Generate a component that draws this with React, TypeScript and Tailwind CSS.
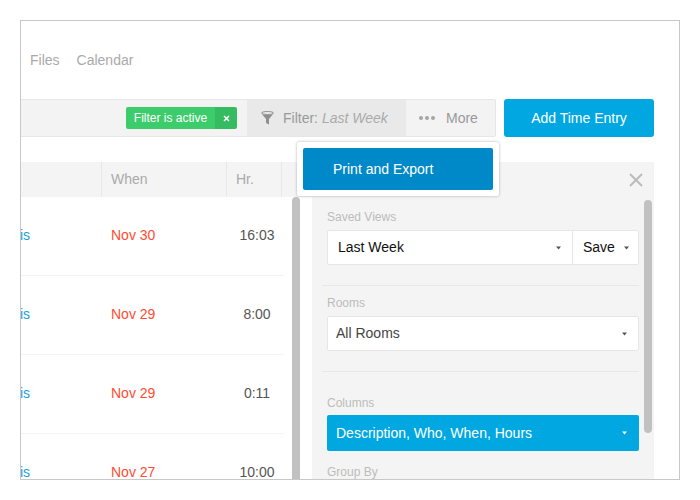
import { Fragment } from "react";

const rows = [
  { when: "Nov 30", hours: "16:03" },
  { when: "Nov 29", hours: "8:00" },
  { when: "Nov 29", hours: "0:11" },
  { when: "Nov 27", hours: "10:00" },
];

function Caret({ className }: { className: string }) {
  return (
    <svg width="7" height="4" viewBox="0 0 7 4" className={className}>
      <path d="M1 0.5h5L3.5 3.5z" fill="currentColor" />
    </svg>
  );
}

function FieldLabel({ children }: { children: string }) {
  return <div className="text-[12px] leading-[14px] text-[#bcbcbc]">{children}</div>;
}

export default function App() {
  return (
    <div className="h-[500px] w-[700px] bg-white p-[20px] font-['Liberation_Sans',Arial,sans-serif]">
      <div className="relative flex h-[460px] w-[660px] flex-col overflow-hidden border border-[#c8c8c8]">
        <nav className="flex h-[78px] shrink-0 items-center gap-[17px] pl-[9px] text-[14px] text-[#aaaaaa]">
          <span>Files</span>
          <span>Calendar</span>
        </nav>

        <div className="flex h-[38px] shrink-0 gap-[8px] pr-[25px]">
          <div className="flex flex-1 rounded-r-[2px] border-y border-r border-[#e6e6e6] bg-[#f3f3f3] text-[14px] text-[#999999]">
            <div className="flex flex-1 items-center justify-end pr-[10px]">
              <div className="flex h-[22px] overflow-hidden rounded-[2px] text-[12px] text-white">
                <span className="flex w-[89px] items-center justify-center bg-[#3dcc6c]">Filter is active</span>
                <span className="flex w-[22px] items-center justify-center bg-[#35bb61]">
                  <svg width="7" height="7" viewBox="0 0 7 7">
                    <path d="M1 1l5 5M6 1L1 6" stroke="white" strokeWidth="1.5" />
                  </svg>
                </span>
              </div>
            </div>
            <div className="flex w-[159px] items-center bg-[#e9e9e9] pl-[14px]">
              <svg width="13" height="14" viewBox="0 0 13 14" className="text-[#8f8f8f]">
                <ellipse cx="6.5" cy="2" rx="6" ry="1.5" fill="none" stroke="currentColor" strokeWidth="1" />
                <path d="M1 3.2C3 4.2 10 4.2 12 3.2L8 8V13.5L5 12V8Z" fill="currentColor" />
              </svg>
              <span className="ml-[9px]">
                Filter: <em className="text-[#aaaaaa]">Last Week</em>
              </span>
            </div>
            <div className="flex w-[89px] items-center pl-[13px]">
              <span className="flex gap-[2px]">
                <i className="h-[4px] w-[4px] rounded-full bg-[#a5a5a5]" />
                <i className="h-[4px] w-[4px] rounded-full bg-[#a5a5a5]" />
                <i className="h-[4px] w-[4px] rounded-full bg-[#a5a5a5]" />
              </span>
              <span className="ml-[11px]">More</span>
            </div>
          </div>
          <button className="w-[150px] rounded-[3px] bg-[#00a7e1] text-[14px] text-white">Add Time Entry</button>
        </div>

        <div className="mt-[25px] flex min-h-0 flex-1 pr-[25px]">
          <div className="flex w-[291px] shrink-0 flex-col">
            <div className="flex h-[35px] shrink-0 bg-[#f4f4f4] text-[14px] text-[#aaaaaa]">
              <div className="w-[81px] border-r border-[#e8e8e8]" />
              <div className="flex w-[125px] items-center border-r border-[#e8e8e8] pl-[9px]">When</div>
              <div className="flex w-[55px] items-center border-r border-[#e8e8e8] pl-[9px]">Hr.</div>
            </div>
            <div className="flex min-h-0 flex-1">
              <div className="w-[263px] shrink-0 text-[14px]">
                {rows.map((row, i) => (
                  <Fragment key={i}>
                    <div className="flex h-[79px] items-center border-b border-[#f4f4f4] pb-[2px]">
                      <span className="-ml-[1px] w-[82px] text-[#1d9ed9]">is</span>
                      <span className="w-[125px] pl-[9px] text-[#ff4b33]">{row.when}</span>
                      <span className="flex-1 pl-[3px] text-center text-[#555555]">{row.hours}</span>
                    </div>
                  </Fragment>
                ))}
              </div>
              <div className="ml-[8px] h-[300px] w-[8px] shrink-0 rounded-t-[4px] bg-[#c1c1c1]" />
            </div>
          </div>

          <aside className="relative ml-0 flex-1 bg-[#f4f4f4] pl-[15px] pr-[15px] pt-[48px]">
            <svg width="14" height="14" viewBox="0 0 14 14" className="absolute right-[11px] top-[11px] text-[#bbbbbb]">
              <path d="M1 1l12 12M13 1L1 13" stroke="currentColor" strokeWidth="2" />
            </svg>
            <div className="absolute right-[2px] top-[38px] h-[233px] w-[8px] rounded-[4px] bg-[#c1c1c1]" />

            <FieldLabel>Saved Views</FieldLabel>
            <div className="mt-[6px] flex h-[35px] rounded-[2px] border border-[#e6e6e6] bg-white text-[14px] text-[#111111]">
              <div className="flex flex-1 items-center justify-between pl-[10px] pr-[10px]">
                <span>Last Week</span>
                <Caret className="text-[#555555]" />
              </div>
              <div className="flex w-[66px] items-center justify-between border-l border-[#e6e6e6] pl-[10px] pr-[8px]">
                <span>Save</span>
                <Caret className="text-[#555555]" />
              </div>
            </div>

            <div className="-ml-[5px] mt-[20px] h-px bg-[#e8e8e8]" />
            <div className="mt-[10px]">
              <FieldLabel>Rooms</FieldLabel>
            </div>
            <div className="mt-[6px] flex h-[35px] items-center justify-between rounded-[2px] border border-[#e6e6e6] bg-white pl-[8px] pr-[10px] text-[14px] text-[#444444]">
              <span>All Rooms</span>
              <Caret className="text-[#555555]" />
            </div>

            <div className="-ml-[5px] mt-[20px] h-px bg-[#e8e8e8]" />
            <div className="mt-[24px]">
              <FieldLabel>Columns</FieldLabel>
            </div>
            <div className="mt-[5px] flex h-[36px] items-center justify-between rounded-[2px] bg-[#00a7e1] pl-[9px] pr-[11px] text-[14px] text-white">
              <span>Description, Who, When, Hours</span>
              <Caret className="text-white" />
            </div>
            <div className="mt-[14px]">
              <FieldLabel>Group By</FieldLabel>
            </div>
          </aside>
        </div>

        <div className="absolute left-[276px] top-[121px] h-[54px] w-[202px] rounded-[2px] bg-white p-[6px] shadow-[0_0_3px_rgba(0,0,0,0.3)]">
          <div className="flex h-[42px] items-center rounded-[2px] bg-[#0089c9] pl-[30px] text-[14px] text-white">
            Print and Export
          </div>
        </div>
      </div>
    </div>
  );
}
